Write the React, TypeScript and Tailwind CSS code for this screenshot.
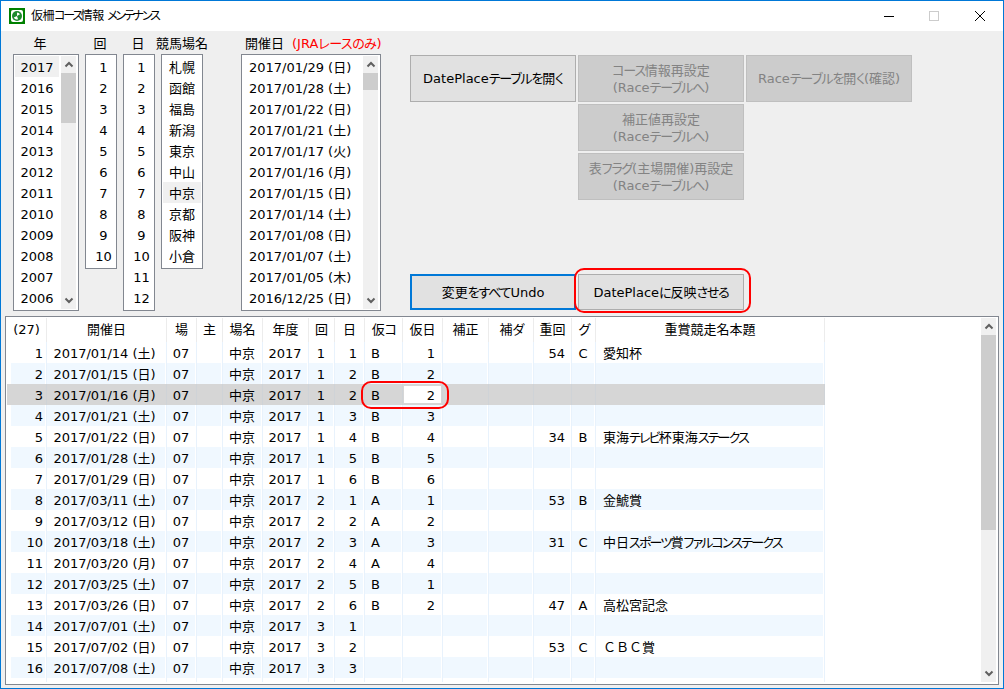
import type { ReactNode } from 'react';

const years = ['2017', '2016', '2015', '2014', '2013', '2012', '2011', '2010', '2009', '2008', '2007', '2006'];
const kai = ['1', '2', '3', '4', '5', '6', '7', '8', '9', '10'];
const nichi = ['1', '2', '3', '4', '5', '6', '7', '8', '9', '10', '11', '12'];
const places = ['札幌', '函館', '福島', '新潟', '東京', '中山', '中京', '京都', '阪神', '小倉'];
const dates = [
  '2017/01/29 (日)', '2017/01/28 (土)', '2017/01/22 (日)', '2017/01/21 (土)', '2017/01/17 (火)', '2017/01/16 (月)',
  '2017/01/15 (日)', '2017/01/14 (土)', '2017/01/08 (日)', '2017/01/07 (土)', '2017/01/05 (木)', '2016/12/25 (日)',
];

// date, kai, nichi, kari-course, kari-nichi, jusho kai, grade, title
const rows: string[][] = [
  ['2017/01/14 (土)', '1', '1', 'B', '1', '54', 'C', '愛知杯'],
  ['2017/01/15 (日)', '1', '2', 'B', '2', '', '', ''],
  ['2017/01/16 (月)', '1', '2', 'B', '2', '', '', ''],
  ['2017/01/21 (土)', '1', '3', 'B', '3', '', '', ''],
  ['2017/01/22 (日)', '1', '4', 'B', '4', '34', 'B', '東海テレビ杯東海ステークス'],
  ['2017/01/28 (土)', '1', '5', 'B', '5', '', '', ''],
  ['2017/01/29 (日)', '1', '6', 'B', '6', '', '', ''],
  ['2017/03/11 (土)', '2', '1', 'A', '1', '53', 'B', '金鯱賞'],
  ['2017/03/12 (日)', '2', '2', 'A', '2', '', '', ''],
  ['2017/03/18 (土)', '2', '3', 'A', '3', '31', 'C', '中日スポーツ賞ファルコンステークス'],
  ['2017/03/20 (月)', '2', '4', 'A', '4', '', '', ''],
  ['2017/03/25 (土)', '2', '5', 'B', '1', '', '', ''],
  ['2017/03/26 (日)', '2', '6', 'B', '2', '47', 'A', '高松宮記念'],
  ['2017/07/01 (土)', '3', '1', '', '', '', '', ''],
  ['2017/07/02 (日)', '3', '2', '', '', '53', 'C', 'ＣＢＣ賞'],
  ['2017/07/08 (土)', '3', '3', '', '', '', '', ''],
];

const gridCols = 'grid grid-cols-[40px_120px_30px_26px_40px_46px_26px_30px_38px_40px_46px_45px_38px_24px_229px] w-[818px]';

const headers = ['(27)', '開催日', '場', '主', '場名', '年度', '回', '日', '仮コ', '仮日', '補正', '補ダ', '重回', 'グ', '重賞競走名本題'];

// Kana in the reference font is much narrower than in Noto, so squeeze only those runs
function Kana({ text, track = 'tracking-[-1.8px]' }: { text: string; track?: string }) {
  return (
    <>
      {text.split(/([ぁ-ゖァ-ヶー]+)/).map((part, i) =>
        i % 2 === 1 ? (
          <span key={i} className={`[font-feature-settings:'palt'] ${track}`}>{part}</span>
        ) : (
          part
        ),
      )}
    </>
  );
}

function BtnText({ text }: { text: string }) {
  return <span><Kana text={text} track="tracking-[-1.2px]" /></span>;
}

function Chevron({ up }: { up?: boolean }) {
  return (
    <svg width="10" height="7" viewBox="0 0 10 7" className="block">
      <polyline
        points={up ? '1.5,5.5 5,2 8.5,5.5' : '1.5,1.5 5,5 8.5,1.5'}
        fill="none"
        stroke="#606060"
        strokeWidth="2"
      />
    </svg>
  );
}

function ScrollBar({ thumb, className }: { thumb: number; className: string }) {
  return (
    <div className={`flex w-[15px] shrink-0 flex-col bg-[#f0f0f0] ${className}`}>
      <div className="flex h-[17px] shrink-0 items-center justify-center">
        <Chevron up />
      </div>
      <div className="shrink-0 bg-[#cdcdcd]" style={{ height: thumb }} />
      <div className="flex-1" />
      <div className="flex h-[17px] shrink-0 items-center justify-center">
        <Chevron />
      </div>
    </div>
  );
}

function ListBox({ items, selected, itemClass, className }: { items: string[]; selected?: number; itemClass: string; className: string }) {
  return (
    <div className={`flex-1 overflow-hidden ${className}`}>
      {items.map((item, i) => (
        <div key={item} className={`h-[21px] leading-[23px] whitespace-nowrap ${itemClass} ${i === selected ? 'bg-[#f0f0f0]' : ''}`}>
          {item}
        </div>
      ))}
    </div>
  );
}

function Column({ label, width, children, box, labelClass = '' }: { label: ReactNode; width: string; children: ReactNode; box: string; labelClass?: string }) {
  return (
    <div className={`flex shrink-0 flex-col ${width}`}>
      <div className={`flex h-[23px] justify-center leading-[25px] whitespace-nowrap ${labelClass}`}>{label}</div>
      <div className={`flex border border-[#828790] bg-white pt-px pl-px ${box}`}>{children}</div>
    </div>
  );
}

function Btn({ children, disabled, focused, className = '' }: { children: ReactNode; disabled?: boolean; focused?: boolean; className?: string }) {
  const look = disabled
    ? 'border border-[#bfbfbf] bg-[#cccccc] text-[#838383]'
    : focused
      ? 'border-2 border-[#0078d7] bg-[#e1e1e1] text-black'
      : 'border border-[#adadad] bg-[#e1e1e1] text-black';
  return (
    <div className={`flex w-[166px] flex-col items-center justify-center text-center leading-[17px] whitespace-nowrap ${look} ${className}`}>
      {children}
    </div>
  );
}

function Row({ row, index }: { row: string[]; index: number }) {
  const selected = index === 2;
  const tinted = !selected && index % 2 === 1;
  const line = selected ? 'border-[#cfd3d7]' : 'border-[#e8f2fc]';
  const bg = tinted ? 'bg-[#f0f8ff] bg-clip-content' : '';
  const cell = `h-[21px] border-r pr-px leading-[23px] whitespace-nowrap ${line} ${bg}`;
  return (
    <div className={`${gridCols} ${selected ? 'bg-[#d6d6d6]' : ''}`}>
      <div className={`${cell} pl-[4px] text-right`}><span className="mr-[2px]">{index + 1}</span></div>
      <div className={`${cell} text-center`}><span className="mr-[3px]">{row[0]}</span></div>
      <div className={`${cell} text-center`}>07</div>
      <div className={cell} />
      <div className={`${cell} text-center`}>中京</div>
      <div className={`${cell} text-center`}>2017</div>
      <div className={`${cell} text-center`}>{row[1]}</div>
      <div className={`${cell} text-right`}><span className="mr-[6px]">{row[2]}</span></div>
      <div className={cell}><span className="ml-[6px]">{row[3]}</span></div>
      <div className={`${cell} relative text-right`}>
        {selected && <div className="absolute top-[2px] left-px h-[17px] w-[37px] bg-white" />}
        <span className="relative mr-[6px]">{row[4]}</span>
      </div>
      <div className={cell} />
      <div className={cell} />
      <div className={`${cell} text-right`}><span className="mr-[5px]">{row[5]}</span></div>
      <div className={`${cell} text-center`}>{row[6]}</div>
      <div className={cell}><span className="ml-[7px]"><Kana text={row[7]} /></span></div>
    </div>
  );
}

export default function App() {
  return (
    <div
      lang="ja"
      className="flex h-[689px] w-[1004px] flex-col overflow-hidden border border-[#0078d7] bg-[#efefef] font-['DejaVu_Sans','Noto_Sans_CJK_JP',sans-serif] text-[13px] text-black"
    >
      {/* Title bar */}
      <div className="flex h-[30px] shrink-0 items-center bg-white pl-[8px]">
        <svg width="16" height="16" viewBox="0 0 16 16" className="shrink-0">
          <rect width="16" height="16" fill="#008000" />
          <rect x="2" y="2" width="12" height="12" rx="2" fill="#fff" />
          <circle cx="8" cy="8" r="5" fill="#1d8a2e" />
          <path d="M8 4.5a3.5 3.5 0 0 1 3 1.7L8 8z" fill="#fff" />
          <path d="M4.8 9.5 8 8l1 3.2a3.5 3.5 0 0 1-4.2-1.7z" fill="#fff" />
        </svg>
        <span className="ml-[6px] flex-1 text-[12px] tracking-[-0.5px]">
          <Kana text="仮柵コース情報 メンテナンス" track="tracking-[-2.2px]" />
        </span>
        <svg width="120" height="12" viewBox="0 0 120 12" className="mr-[18px] shrink-0">
          <line x1="19" y1="6.5" x2="29" y2="6.5" stroke="#000" />
          <rect x="64.5" y="1.5" width="9" height="9" fill="none" stroke="#cccccc" />
          <path d="M110 1 120 11M120 1 110 11" stroke="#000" fill="none" />
        </svg>
      </div>

      {/* Lists and buttons */}
      <div className="flex h-[285px] shrink-0 pl-[12px]">
        <Column label="年" width="w-[66px]" box="h-[257px]" labelClass="pr-[12px]">
          <ListBox items={years} selected={0} itemClass="text-center" className="mr-[2px]" />
          <ScrollBar thumb={50} className="mr-[2px] mb-px" />
        </Column>
        <Column label="回" width="ml-[6px] w-[32px]" box="h-[215px]" labelClass="pr-[2px]">
          <ListBox items={kai} itemClass="pl-[4px] text-center" className="" />
        </Column>
        <Column label="日" width="ml-[6px] w-[32px]" box="h-[257px]" labelClass="pr-[2px]">
          <ListBox items={nichi} itemClass="pl-[4px] text-center" className="" />
        </Column>
        <Column label="競馬場名" width="ml-[6px] w-[42px]" box="h-[215px] pr-px">
          <ListBox items={places} selected={6} itemClass="text-center" className="" />
        </Column>
        <Column
          label={
            <span className="w-full pl-[4px]">
              開催日
              <span className="ml-[8px] text-[#ff0000]">
                <Kana text="(JRAレースのみ)" track="tracking-[-0.5px]" />
              </span>
            </span>
          }
          width="ml-[38px] w-[140px]"
          box="h-[257px]"
        >
          <ListBox items={dates} itemClass="pl-[6px]" className="" />
          <ScrollBar thumb={17} className="mr-[2px] mb-px" />
        </Column>

        <div className="ml-[29px] flex flex-col pt-[24px]">
          <div className="flex gap-[2px]">
            <div className="flex flex-col gap-[2px]">
              <Btn className="h-[47px]"><BtnText text="DatePlaceテーブルを開く" /></Btn>
            </div>
            <div className="flex flex-col gap-[2px]">
              <Btn disabled className="h-[47px]"><BtnText text="コース情報再設定" /><BtnText text="(Raceテーブルへ)" /></Btn>
              <Btn disabled className="h-[47px]"><BtnText text="補正値再設定" /><BtnText text="(Raceテーブルへ)" /></Btn>
              <Btn disabled className="h-[47px]"><BtnText text="表フラグ(主場開催)再設定" /><BtnText text="(Raceテーブルへ)" /></Btn>
            </div>
            <Btn disabled className="h-[47px]"><BtnText text="Raceテーブルを開く(確認)" /></Btn>
          </div>
          <div className="relative mt-[74px] flex gap-[2px]">
            <Btn focused className="h-[36px]"><BtnText text="変更をすべてUndo" /></Btn>
            <Btn className="h-[36px]"><BtnText text="DatePlaceに反映させる" /></Btn>
            <div className="absolute top-[-6px] left-[164px] h-[45px] w-[177px] rounded-[10px] border-2 border-[#ff0000]" />
          </div>
        </div>
      </div>

      {/* Data grid */}
      <div className="relative mr-[4px] ml-[4px] flex h-[369px] shrink-0 border border-[#828790] bg-white pt-px pr-[2px] pb-[2px] pl-px">
        <div className="flex min-w-0 flex-1 flex-col overflow-hidden">
          <div className={gridCols}>
            {headers.map(h => (
              <div key={h} className="h-[24px] border-r border-[#ececec] text-center leading-[23px] whitespace-nowrap">
                <Kana text={h} />
              </div>
            ))}
          </div>
          {rows.map((row, i) => (
            <Row key={row[0]} row={row} index={i} />
          ))}
          <div className={`${gridCols} flex-1`}>
            {headers.map(h => (
              <div key={h} className="border-r border-[#e8f2fc]" />
            ))}
          </div>
        </div>
        <ScrollBar thumb={195} className="" />
        {/* Highlight around the edited cell */}
        <div className="absolute top-[64px] left-[355px] h-[28px] w-[88px] rounded-[10px] border-2 border-[#ff0000]" />
      </div>
    </div>
  );
}
